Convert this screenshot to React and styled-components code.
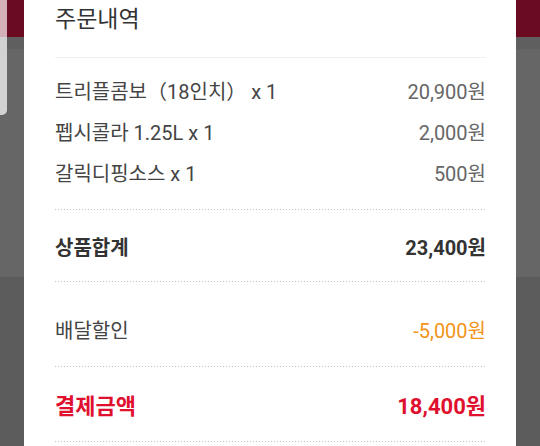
import React from 'react';
import styled, { createGlobalStyle } from 'styled-components';

const GlobalStyle = createGlobalStyle`
  html, body {
    margin: 0;
    padding: 0;
  }
  body {
    width: 540px;
    height: 446px;
    overflow: hidden;
    font-family: Roboto, "Noto Sans CJK KR", sans-serif;
  }
`;

const Page = styled.div`
  position: relative;
  width: 540px;
  height: 446px;
  overflow: hidden;
  display: flex;
  flex-direction: column;
  background: #5c5c5c;
`;

const Header = styled.div`
  height: 37px;
  background: #6b0b22;
`;

const SubBand = styled.div`
  height: 12px;
  background: #5f5f5f;
`;

const Content = styled.div`
  height: 228px;
  background: #666666;
`;

const Drawer = styled.div`
  position: absolute;
  left: 0;
  top: 0;
  width: 7px;
  height: 115px;
  background: linear-gradient(#d4b1b9 0 37px, #d2d2d2 37px);
  border-bottom-right-radius: 5px;
`;

const Modal = styled.div`
  position: absolute;
  top: 0;
  left: 24px;
  right: 24px;
  bottom: 0;
  background: #fff;
  padding: 0 30px 0 31px;
  display: flex;
  flex-direction: column;
`;

const Title = styled.h2`
  margin: 0;
  height: 40px;
  line-height: 40px;
  font-size: 23px;
  font-weight: 400;
  color: #333;
  padding-bottom: 17px;
  border-bottom: 1px solid #f0f0f0;
`;

const Items = styled.div`
  padding: 12px 0 16px;
  display: flex;
  flex-direction: column;
`;

const Row = styled.div`
  display: flex;
  justify-content: space-between;
  align-items: center;
  height: 41px;
  font-size: ${(p) => p.$size || 20}px;
  font-weight: ${(p) => (p.$bold ? 700 : 400)};
  color: ${(p) => p.$color || '#444'};
  white-space: nowrap;
`;

const Price = styled.span`
  color: ${(p) => p.$color || '#666'};
`;

const Dotted = styled.div`
  height: 1px;
  flex-shrink: 0;
  background: repeating-linear-gradient(to right, #c4c4c4 0 1px, transparent 1px 3px);
`;

const Section = styled.div`
  padding: ${(p) => p.$pad};
`;

const items = [
  { name: '트리플콤보（18인치） x 1', price: '20,900원' },
  { name: '펩시콜라 1.25L x 1', price: '2,000원' },
  { name: '갈릭디핑소스 x 1', price: '500원' },
];

export default function App() {
  return (
    <>
      <GlobalStyle />
      <Page>
        <Header />
        <SubBand />
        <Content />
        <Drawer />
        <Modal>
          <Title>주문내역</Title>
          <Items>
            {items.map((it) => (
              <Row key={it.name}>
                <span>{it.name}</span>
                <Price>{it.price}</Price>
              </Row>
            ))}
          </Items>
          <Dotted />
          <Section $pad="16px 0 14px">
            <Row $bold $color="#333">
              <span>상품합계</span>
              <Price $color="#333">23,400원</Price>
            </Row>
          </Section>
          <Dotted />
          <Section $pad="27px 0 16px">
            <Row>
              <span>배달할인</span>
              <Price $color="#f39419">-5,000원</Price>
            </Row>
          </Section>
          <Dotted />
          <Section $pad="16px 0 17px">
            <Row $bold $size={22} $color="#e0102f">
              <span>결제금액</span>
              <Price $color="#e0102f">18,400원</Price>
            </Row>
          </Section>
          <Dotted />
        </Modal>
      </Page>
    </>
  );
}
